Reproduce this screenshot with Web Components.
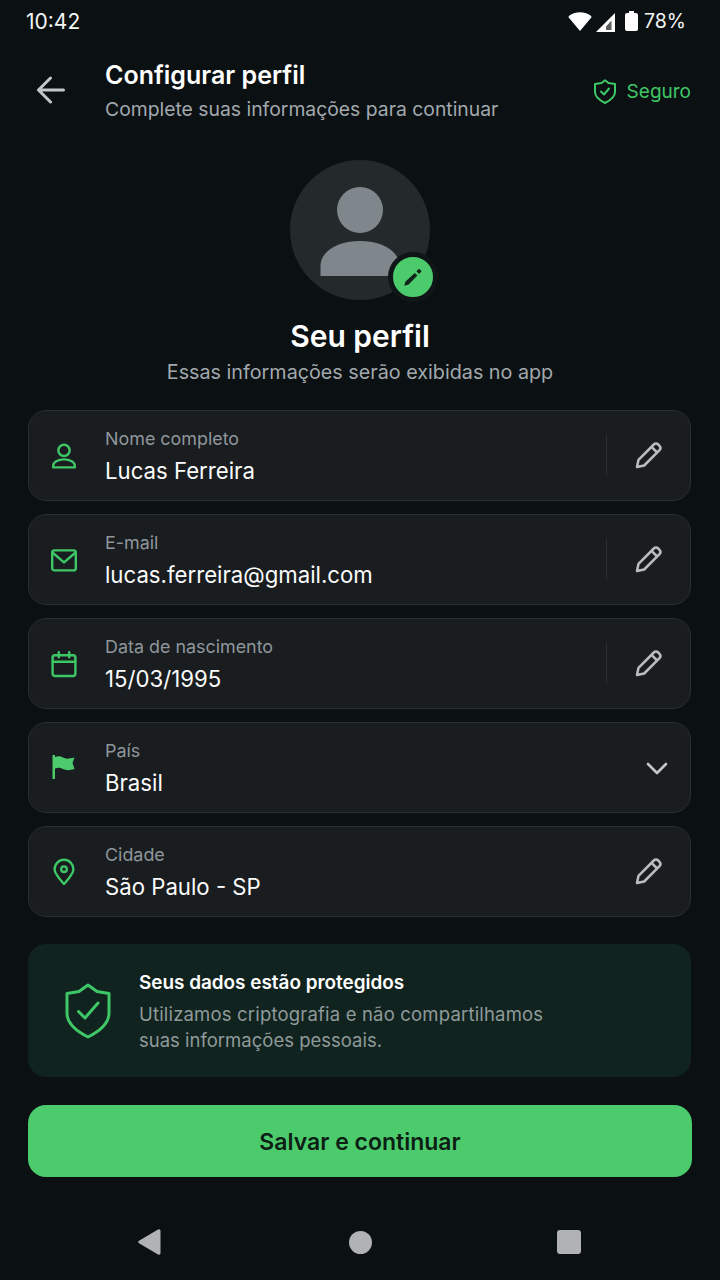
<!DOCTYPE html>
<html lang="pt-BR">
<head>
<meta charset="utf-8">
<title>Configurar perfil</title>
<style>
    html, body { margin: 0; padding: 0; background: #0b1012; }
    body {
        width: 720px;
        height: 1280px;
        overflow: hidden;
        font-family: Inter, "Liberation Sans", sans-serif;
        color: #fff;
    }
    .page { display: flex; flex-direction: column; height: 1280px; }
</style>
</head>
<body>
<div class="page">
    <status-bar></status-bar>
    <app-header></app-header>
    <profile-head></profile-head>
    <field-list>
        <form-field label="Nome completo" value="Lucas Ferreira" icon="user" action="edit" divider></form-field>
        <form-field label="E-mail" value="lucas.ferreira@gmail.com" icon="mail" action="edit" divider></form-field>
        <form-field label="Data de nascimento" value="15/03/1995" icon="calendar" action="edit" divider></form-field>
        <form-field label="País" value="Brasil" icon="flag" action="chevron"></form-field>
        <form-field label="Cidade" value="São Paulo - SP" icon="pin" action="edit"></form-field>
    </field-list>
    <info-note title="Seus dados estão protegidos"><span style="letter-spacing:.18px">Utilizamos criptografia e não compartilhamos</span><br>suas informações pessoais.</info-note>
    <primary-button>Salvar e continuar</primary-button>
    <nav-bar></nav-bar>
</div>

<script>
const ICONS = {
    user: '<circle cx="14" cy="8.400" r="5.600"/><path d="M3.200 25.400v-1.600c0-3.800 4.600-6.400 10.800-6.400s10.800 2.600 10.800 6.400v1.600z"/>',
    mail: '<rect x="2.200" y="4.400" width="23.600" height="20" rx="2.200"/><path d="M3 7l11 9.400 11-9.400"/>',
    calendar: '<rect x="2.600" y="5.200" width="22.800" height="20.800" rx="2.400"/><path d="M2.600 11.800h22.800M8.800 2.200v5M19.200 2.200v5"/>',
    pin: '<path d="M14 26c-5-5.600-9.400-10.200-9.400-14.800a9.400 9.400 0 0 1 18.800 0c0 4.600-4.400 9.200-9.400 14.800z"/><circle cx="14" cy="11.200" r="2.800"/>'
};

class StatusBar extends HTMLElement {
    constructor() {
        super();
        this.attachShadow({ mode: 'open' });
    }

    connectedCallback() {
        this.shadowRoot.innerHTML = `
            <style>
                :host {
                    display: flex;
                    flex: none;
                    height: 44px;
                    align-items: center;
                    justify-content: space-between;
                    padding: 0 34px 2px 26px;
                    box-sizing: border-box;
                    font-size: 21px;
                    color: #f4f5f5;
                }
                .right { display: flex; align-items: center; }
                svg { display: block; fill: #fff; }
                .pct { margin-left: 6px; font-size: 19.500px; }
            </style>
            <span>10:42</span>
            <div class="right">
                <svg width="24" height="20" viewBox="0 0 24 20"><path d="M12 20 .5 6.200Q.5 5 1.500 4.400C8 .2 16 .2 22.500 4.400Q23.500 5 23.500 6.200z"/></svg>
                <svg style="margin-left:4px;margin-top:2px" width="19" height="19" viewBox="0 0 19 19"><path d="M19 0v19H0z"/><path d="M15.500 7.500 10 13.500v3.500h5.500z" fill="#5b5f60"/></svg>
                <svg style="margin-left:10px" width="13" height="20" viewBox="0 0 13 20"><path d="M4 0h5v2h2q2 0 2 2v14q0 2-2 2h-9q-2 0-2-2v-14q0-2 2-2h2z"/></svg>
                <span class="pct">78%</span>
            </div>
        `;
    }
}

class AppHeader extends HTMLElement {
    constructor() {
        super();
        this.attachShadow({ mode: 'open' });
    }

    connectedCallback() {
        this.shadowRoot.innerHTML = `
            <style>
                :host {
                    display: flex;
                    flex: none;
                    height: 116px;
                    box-sizing: border-box;
                    padding: 14px 29px 0 37px;
                }
                .back { width: 68px; flex: none; padding-top: 18px; }
                .text { flex: 1; }
                h1 { margin: 0; font-size: 25px; line-height: 34px; font-weight: 600; color: #fff; }
                p { margin: 1px 0 0; font-size: 19.350px; line-height: 32px; color: #a2a9ae; }
                .safe {
                    display: flex;
                    align-items: center;
                    gap: 11px;
                    height: 38px;
                    margin-top: 14px;
                    font-size: 19px;
                    color: #3ec766;
                }
                svg { display: block; fill: none; }
            </style>
            <div class="back">
                <svg width="28" height="28" viewBox="0 0 28 28" stroke="#c3c7ca" stroke-width="3" stroke-linecap="round" stroke-linejoin="round"><path d="M26.500 14H2M13.500 2 1.500 14l12 12"/></svg>
            </div>
            <div class="text">
                <h1>Configurar perfil</h1>
                <p>Complete suas informações para continuar</p>
            </div>
            <div class="safe">
                <svg width="22" height="25" viewBox="0 0 22 25" stroke="#3ec766" stroke-width="2" stroke-linejoin="round" stroke-linecap="round"><path d="M11 1.200 14.500 4 21 5v8c0 5-4 8-10 11C5 21 1 18 1 13V5l6.500-1z"/><path d="M7 12.500l3 3 5-6"/></svg>
                <span>Seguro</span>
            </div>
        `;
    }
}

class ProfileHead extends HTMLElement {
    constructor() {
        super();
        this.attachShadow({ mode: 'open' });
    }

    connectedCallback() {
        this.shadowRoot.innerHTML = `
            <style>
                :host {
                    display: flex;
                    flex: none;
                    flex-direction: column;
                    align-items: center;
                    height: 250px;
                }
                .avatar {
                    position: relative;
                    width: 140px;
                    height: 140px;
                    border-radius: 50%;
                    background: #24292c;
                }
                .avatar > svg { display: block; }
                .badge {
                    position: absolute;
                    left: 98px;
                    top: 92px;
                    width: 40px;
                    height: 40px;
                    border-radius: 50%;
                    background: #4ccb6d;
                    border: 5px solid #101517;
                    display: flex;
                    align-items: center;
                    justify-content: center;
                }
                h2 { margin: 17px 0 0; font-size: 30px; line-height: 38px; font-weight: 600; color: #fff; }
                p { margin: 3px 0 0; font-size: 19.750px; line-height: 28px; color: #a2a9ae; }
            </style>
            <div class="avatar">
                <svg width="140" height="140" viewBox="0 0 140 140" fill="#7f878d">
                    <circle cx="70" cy="50" r="23"/>
                    <path d="M30.500 116V106C30.500 91 48 81 70 81s39.500 10 39.500 25V116z"/>
                </svg>
                <div class="badge">
                    <svg width="20" height="20" viewBox="0 0 20 20" fill="#10241a"><path d="M1.300 18.700l1-4 9.500-8.800 2.600 2.700-9 9.100z"/><path d="M13.400 4.300l1.700-1.800q1-1 2 0l.7.700q1 1 0 2L16 7z"/></svg>
                </div>
            </div>
            <h2>Seu perfil</h2>
            <p>Essas informações serão exibidas no app</p>
        `;
    }
}

class FieldList extends HTMLElement {
    constructor() {
        super();
        this.attachShadow({ mode: 'open' });
    }

    connectedCallback() {
        this.shadowRoot.innerHTML = `
            <style>
                :host {
                    display: flex;
                    flex: none;
                    flex-direction: column;
                    gap: 13px;
                    padding: 0 29px 0 28px;
                }
            </style>
            <slot></slot>
        `;
    }
}

class FormField extends HTMLElement {
    constructor() {
        super();
        this.attachShadow({ mode: 'open' });
    }

    iconMarkup() {
        const name = this.getAttribute('icon');
        if (name === 'flag') {
            return `<svg width="28" height="28" viewBox="0 0 28 28" fill="#4ccb6d"><path d="M2.500 1h2.500v2c3-1 5-1 8 .500s5 1.500 11.500 0l-2 5.500 2 6c-5 1.500-8.500 1.500-11.500 0s-5-1.500-8-.500v10.500H2.500z"/></svg>`;
        }
        return `<svg width="28" height="28" viewBox="0 0 28 28" fill="none" stroke="#3ec766" stroke-width="2.400" stroke-linecap="round" stroke-linejoin="round">${ICONS[name]}</svg>`;
    }

    actionMarkup() {
        if (this.getAttribute('action') === 'chevron') {
            return `<svg style="margin-top:2px" width="22" height="14" viewBox="0 0 22 14" fill="none" stroke="#c3c7ca" stroke-width="2.600" stroke-linecap="round" stroke-linejoin="round"><path d="M2 3l9 9 9-9"/></svg>`;
        }
        return `<svg width="28" height="28" viewBox="0 0 28 28" fill="none" stroke="#b9bdc0" stroke-width="2.500" stroke-linejoin="round"><path d="M2 26l1.500-7.200L18.800 3.500q2.200-2.200 4.400 0l1.300 1.300q2.200 2.200 0 4.400L9.200 24.500z"/><path d="M16.500 5.800l5.700 5.700"/></svg>`;
    }

    connectedCallback() {
        const isChevron = this.getAttribute('action') === 'chevron';
        const hasDivider = this.hasAttribute('divider');
        this.shadowRoot.innerHTML = `
            <style>
                :host {
                    display: flex;
                    align-items: center;
                    height: 91px;
                    box-sizing: border-box;
                    border: 1px solid #292e32;
                    border-radius: 18px;
                    background: #191d20;
                }
                .icon { flex: none; width: 76px; padding-left: 20.500px; box-sizing: border-box; }
                svg { display: block; }
                .text { flex: 1; min-width: 0; padding-top: 3px; }
                .label { font-size: 17.900px; line-height: 24px; color: #8f969b; }
                .value { font-size: 22.200px; line-height: 32px; margin-top: 4px; color: #fbfbfb; }
                .divider { flex: none; width: 1px; height: 40px; margin-bottom: 2px; background: #2b3034; }
                .action {
                    flex: none;
                    width: ${isChevron ? 67 : 83}px;
                    display: flex;
                    justify-content: center;
                    padding-bottom: 2px;
                }
            </style>
            <div class="icon">${this.iconMarkup()}</div>
            <div class="text">
                <div class="label">${this.getAttribute('label')}</div>
                <div class="value">${this.getAttribute('value')}</div>
            </div>
            ${hasDivider ? '<div class="divider"></div>' : ''}
            <div class="action">${this.actionMarkup()}</div>
        `;
    }
}

class InfoNote extends HTMLElement {
    constructor() {
        super();
        this.attachShadow({ mode: 'open' });
    }

    connectedCallback() {
        this.shadowRoot.innerHTML = `
            <style>
                :host {
                    display: flex;
                    flex: none;
                    align-items: center;
                    height: 133px;
                    margin: 27px 29px 0 28px;
                    box-sizing: border-box;
                    border-radius: 18px;
                    background: #11231f;
                }
                .icon { flex: none; width: 111px; padding-left: 37px; box-sizing: border-box; }
                svg { display: block; }
                .text { padding-top: 1px; }
                .title { font-size: 18.900px; line-height: 26px; font-weight: 600; color: #fff; margin-bottom: 5px; }
                .body { font-size: 18.500px; line-height: 26px; color: #8f9a9a; }
            </style>
            <div class="icon">
                <svg width="46" height="56" viewBox="0 0 46 56" fill="none" stroke="#3ec766" stroke-width="3" stroke-linejoin="round" stroke-linecap="round"><path d="M23 2 32 8.500 44 10.500V30C44 41 35 48 23 54 11 48 2 41 2 30V10.500L14 8.500z"/><path d="M13.500 28.500 20 35 33 20"/></svg>
            </div>
            <div class="text">
                <div class="title">${this.getAttribute('title')}</div>
                <div class="body"><slot></slot></div>
            </div>
        `;
    }
}

class PrimaryButton extends HTMLElement {
    constructor() {
        super();
        this.attachShadow({ mode: 'open' });
    }

    connectedCallback() {
        this.shadowRoot.innerHTML = `
            <style>
                :host {
                    display: flex;
                    flex: none;
                    align-items: center;
                    justify-content: center;
                    height: 72px;
                    box-sizing: border-box;
                    padding-top: 2px;
                    margin: 28px 28px 0;
                    border-radius: 18px;
                    background: #4ccb6d;
                    color: #0d1f14;
                    font-size: 23px;
                    font-weight: 600;
                }
            </style>
            <slot></slot>
        `;
    }
}

class NavBar extends HTMLElement {
    constructor() {
        super();
        this.attachShadow({ mode: 'open' });
    }

    connectedCallback() {
        this.shadowRoot.innerHTML = `
            <style>
                :host {
                    display: flex;
                    flex: 1;
                    align-items: center;
                    padding: 27px 0 0 138px;
                }
                svg { display: block; fill: #b0b2b3; }
                .dot { width: 23px; height: 23px; margin-left: 188px; border-radius: 50%; background: #b0b2b3; }
                .sq { width: 24px; height: 24px; margin-left: 185px; border-radius: 3px; background: #b0b2b3; }
            </style>
            <svg width="23" height="26" viewBox="0 0 23 26"><path d="M1 11.800 20 .500q2.500-.8 2.500 1.500v22q0 2.300-2.500 1.500L1 14.200q-1.800-1.200 0-2.400z"/></svg>
            <div class="dot"></div>
            <div class="sq"></div>
        `;
    }
}

customElements.define('status-bar', StatusBar);
customElements.define('app-header', AppHeader);
customElements.define('profile-head', ProfileHead);
customElements.define('field-list', FieldList);
customElements.define('form-field', FormField);
customElements.define('info-note', InfoNote);
customElements.define('primary-button', PrimaryButton);
customElements.define('nav-bar', NavBar);
</script>
</body>
</html>
